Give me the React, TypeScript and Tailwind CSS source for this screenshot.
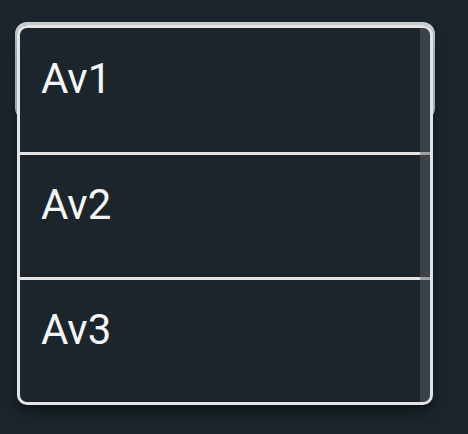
const options = ["Av1", "Av2", "Av3"];

export default function App() {
    return (
        <div className="w-[468px] h-[434px] bg-[#1b252b] pt-[22px] pl-[15px]" style={{ fontFamily: "Roboto, 'Liberation Sans', sans-serif" }}>
            <div className="relative w-[420px]">
                {/* Select trigger */}
                <div className="h-[98px] rounded-[12px] border-[3px] border-[#d4d6d7]" />

                {/* Open listbox */}
                <div className="absolute left-[2px] top-[3px] w-[416px] rounded-[10px] border-[3px] border-[#e2e4e5] bg-[#1b252b] overflow-hidden shadow-[0_6px_14px_rgba(0,0,0,0.45)]">
                    {options.map((opt, i) => (
                        <div
                            key={opt}
                            className={`pl-[21px] text-[42px] leading-[48px] text-[#f4f5f5] ${i > 0 ? "h-[125px] pt-[26px] border-t-[3px] border-[#e2e4e5]" : "h-[124px] pt-[27px]"}`}
                        >
                            {opt}
                        </div>
                    ))}
                    <div className="absolute right-0 top-0 bottom-0 w-[10px] bg-[rgba(92,96,100,0.5)]" />
                </div>
            </div>
        </div>
    );
}
